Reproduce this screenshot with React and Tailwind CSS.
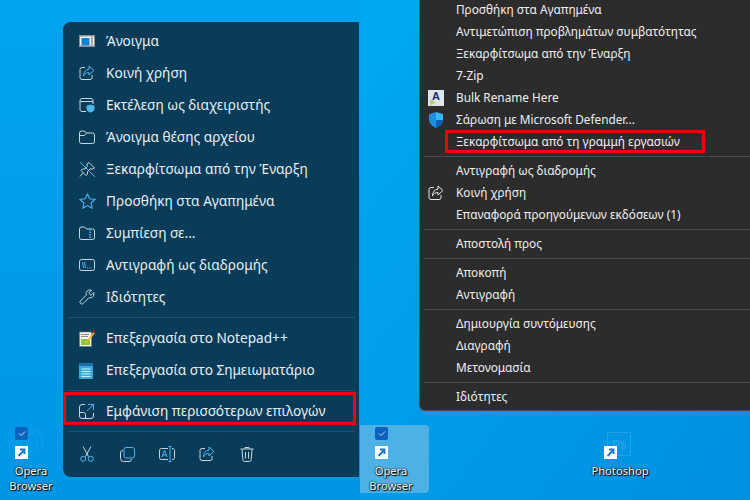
import React from 'react';

const line = '#c9d6dd';
const blue = '#4fb3ea';

const WindowIcon = () => (
  <svg width="16" height="12" viewBox="0 0 16 12">
    <rect width="16" height="12" fill="#8d8f91" />
    <rect x="1" y="1.5" width="14" height="9" fill="#f4f6f8" />
    <rect x="2.500" y="3" width="8" height="7.500" fill="#0f7fd8" />
    <path d="M12 3h2M12 5h2M12 7h2M12 9h2" stroke="#555" strokeWidth="1" />
  </svg>
);

const ShareIcon = ({ c1 = line, c2 = blue }) => (
  <svg width="16" height="16" viewBox="0 0 16 16" fill="none">
    <path d="M6 2.500H3a2 2 0 0 0-2 2v8a2 2 0 0 0 2 2h8a2 2 0 0 0 2-2v-2.500" stroke={c1} />
    <path d="M10 1l5 4.500-5 4.500V7.500C7.500 7.500 5.500 8.500 4.500 11c0-4 2-6.500 5.500-6.800z" stroke={c2} />
  </svg>
);

const AdminIcon = () => (
  <svg width="16" height="16" viewBox="0 0 16 16" fill="none">
    <path d="M7 14.500H3a2 2 0 0 1-2-2v-9a2 2 0 0 1 2-2h9a2 2 0 0 1 2 2V7M1 4.500h13" stroke={line} />
    <path d="M11.500 7.500l4 1.200v3c0 2-1.800 3.200-4 3.800-2.200-.6-4-1.800-4-3.800v-3z" fill={blue} />
  </svg>
);

const FolderIcon = () => (
  <svg width="16" height="14" viewBox="0 0 16 14" fill="none">
    <path d="M.5 3a2 2 0 0 1 2-2h3l2 2h6a2 2 0 0 1 2 2v6.500a2 2 0 0 1-2 2h-11a2 2 0 0 1-2-2zM.5 5.500h5l2-2.500" stroke={line} />
  </svg>
);

const UnpinIcon = () => (
  <svg width="17" height="17" viewBox="0 0 17 17" fill="none">
    <path d="M1 1l15 15" stroke={blue} />
    <path d="M10 1.500l5.500 5.500-2 1-2.500 0-2.500 2.500 0 2.500-1.500 1.500-5-5 1.500-1.500 2.500 0L8 5.500 8 3zM4 11.500l-3 4" stroke={line} />
  </svg>
);

const StarIcon = () => (
  <svg width="17" height="16" viewBox="0 0 17 16" fill="none">
    <path d="M8.500 1l2.200 4.800 5.300.6-3.900 3.600 1 5.200-4.600-2.600-4.600 2.600 1-5.200L1 6.400l5.300-.6z" stroke={blue} strokeWidth="1.100" />
  </svg>
);

const ZipIcon = () => (
  <svg width="16" height="14" viewBox="0 0 16 14" fill="none">
    <path d="M.5 3a2 2 0 0 1 2-2h3l2 2h6a2 2 0 0 1 2 2v6.500a2 2 0 0 1-2 2h-11a2 2 0 0 1-2-2z" stroke={line} />
    <path d="M11 3v10.500" stroke={blue} strokeWidth="1.600" strokeDasharray="1.500 1" />
  </svg>
);

const PathIcon = () => (
  <svg width="16" height="12" viewBox="0 0 16 12" fill="none">
    <rect x=".5" y=".5" width="15" height="11" rx="2" stroke={line} />
    <path d="M3.500 3l1 6M5.500 3l1 6M8 9h.9M10 9h.9M12 9h.9" stroke={blue} />
  </svg>
);

const WrenchIcon = () => (
  <svg width="16" height="16" viewBox="0 0 16 16" fill="none">
    <path d="M14.800 3.500l-2.800 2.800-2.300-2.300L12.500 1.200C10.300.5 8 1.300 7.300 3.300c-.3 1-.2 1.900.1 2.700L1.500 11.900a1.800 1.800 0 0 0 2.600 2.600L10 8.600c2.500.9 5.600-1 4.800-5.100z" stroke={line} />
  </svg>
);

const NotepadPlusIcon = () => (
  <svg width="16" height="17" viewBox="0 0 16 17">
    <rect x="0.500" y="2" width="12" height="14.500" fill="#f6f6ee" stroke="#777" strokeWidth=".6" />
    <rect x="2" y="9" width="9" height="6" fill="#8cc63f" />
    <path d="M2 4.500h8M2 6.500h7" stroke="#888" />
    <path d="M14.500 2L7.500 11l-1 2.500 2.200-1.200L15.800 3.300z" fill="#f2b632" />
    <rect x="13.800" y="0" width="2.200" height="2.200" fill="#a3141d" />
  </svg>
);

const NotepadIcon = () => (
  <svg width="14" height="17" viewBox="0 0 14 17">
    <rect x="0" y="1" width="14" height="16" rx="1" fill="#3fa6dc" />
    <rect x="0" y="1" width="14" height="3" fill="#1a6fa8" />
    <path d="M2.500 7h9M2.500 9.500h9M2.500 12h9M2.500 14.500h9" stroke="#d6eefa" />
  </svg>
);

const ExpandIcon = () => (
  <svg width="15" height="15" viewBox="0 0 15 15" fill="none">
    <path d="M6 .5H3a2.500 2.500 0 0 0-2.500 2.500v9A2.500 2.500 0 0 0 3 14.500h9a2.500 2.500 0 0 0 2.500-2.500V9M.5 8.500h4a2 2 0 0 1 2 2v4" stroke={line} />
    <path d="M9 .5h5.500V6M14.500.5L8 7" stroke={blue} />
  </svg>
);

const CutIcon = () => (
  <svg width="14" height="16" viewBox="0 0 14 16" fill="none">
    <path d="M3 .5l5.500 10M11 .5L5.500 10.500" stroke={line} />
    <circle cx="3.200" cy="12.800" r="2.500" stroke={blue} />
    <circle cx="10.800" cy="12.800" r="2.500" stroke={blue} />
  </svg>
);

const CopyIcon = () => (
  <svg width="15" height="15" viewBox="0 0 15 15" fill="none">
    <path d="M3 3.500a2.500 2.500 0 0 0-2.500 2.500v5.500A3 3 0 0 0 3.500 14.500H9a2.500 2.500 0 0 0 2.500-2.500" stroke={line} />
    <rect x="4" y=".5" width="10.500" height="10.500" rx="2" stroke={blue} />
  </svg>
);

const RenameIcon = () => (
  <svg width="16" height="16" viewBox="0 0 16 16" fill="none">
    <path d="M9 2.500H2.500a2 2 0 0 0-2 2v7a2 2 0 0 0 2 2H9M13 2.500a2 2 0 0 1 2.500 2v7a2 2 0 0 1-2.500 2" stroke={line} />
    <path d="M11 .5v15M9.500.5h3M9.500 15.500h3M3 11l2.300-6.500h.4L8 11M3.800 9h3.400" stroke={blue} />
  </svg>
);

const TrashIcon = () => (
  <svg width="14" height="16" viewBox="0 0 14 16" fill="none">
    <path d="M.5 3h13M5 3V1.500h4V3M2 3l.8 10.500a2 2 0 0 0 2 2h4.400a2 2 0 0 0 2-2L12 3M5.500 6v6.500M8.500 6v6.500" stroke={line} />
  </svg>
);

const BulkRenameIcon = () => (
  <svg width="16" height="16" viewBox="0 0 16 16">
    <rect width="16" height="16" fill="#dfe6ea" />
    <text x="8" y="10" textAnchor="middle" fontSize="11" fontWeight="700" fontFamily="Liberation Sans" fill="#122a78">A</text>
    <path d="M2 9l6 3.500-6 3.500z" fill="#b4d56b" />
  </svg>
);

const DefenderIcon = () => (
  <svg width="14" height="16" viewBox="0 0 14 16">
    <path d="M7 0l7 2.200v5.300c0 4-3 6.700-7 8.500-4-1.800-7-4.500-7-8.500V2.200z" fill="#1b8fe0" />
    <path d="M7 0l7 2.200V8H7z" fill="#38b6f0" />
    <path d="M7 8h7c-.3 3.500-3.200 6.300-7 8z" fill="#0c5fb8" />
  </svg>
);

const ShortcutArrow = () => (
  <div className="flex h-[13px] w-[13px] items-center justify-center bg-white">
    <svg width="9" height="9" viewBox="0 0 9 9" fill="none">
      <path d="M1.500 8L7 2.500M3 1.500h4.500V6" stroke="#1778c9" strokeWidth="1.800" />
    </svg>
  </div>
);

const CheckBox = () => (
  <div className="flex h-[13px] w-[13px] items-center justify-center rounded-[2px] bg-[#0a62bd]">
    <svg width="8" height="7" viewBox="0 0 8 7" fill="none">
      <path d="M1 3.500l2 2 4-4" stroke="#bcd6ef" />
    </svg>
  </div>
);

const newMenu = [
  [<WindowIcon />, 'Άνοιγμα'],
  [<ShareIcon />, 'Κοινή χρήση'],
  [<AdminIcon />, 'Εκτέλεση ως διαχειριστής'],
  [<FolderIcon />, 'Άνοιγμα θέσης αρχείου'],
  [<UnpinIcon />, 'Ξεκαρφίτσωμα από την Έναρξη'],
  [<StarIcon />, 'Προσθήκη στα Αγαπημένα'],
  [<ZipIcon />, 'Συμπίεση σε...'],
  [<PathIcon />, 'Αντιγραφή ως διαδρομής'],
  [<WrenchIcon />, 'Ιδιότητες'],
];

const classicGroups = [
  [
    ['Προσθήκη στα Αγαπημένα'],
    ['Αντιμετώπιση προβλημάτων συμβατότητας'],
    ['Ξεκαρφίτσωμα από την Έναρξη'],
    ['7-Zip'],
    ['Bulk Rename Here', <BulkRenameIcon />],
    ['Σάρωση με Microsoft Defender...', <DefenderIcon />],
    ['Ξεκαρφίτσωμα από τη γραμμή εργασιών'],
  ],
  [
    ['Αντιγραφή ως διαδρομής'],
    ['Κοινή χρήση', <ShareIcon c1="#e8e8e8" c2="#e8e8e8" />],
    ['Επαναφορά προηγούμενων εκδόσεων (1)'],
  ],
  [['Αποστολή προς']],
  [['Αποκοπή'], ['Αντιγραφή']],
  [['Δημιουργία συντόμευσης'], ['Διαγραφή'], ['Μετονομασία']],
  [['Ιδιότητες']],
];

const NewRow = ({ icon, label }) => (
  <div className="flex h-8 items-center">
    <div className="flex w-[43px] shrink-0 items-center pl-4">{icon}</div>
    <span>{label}</span>
  </div>
);

const DesktopLabel = ({ children }) => (
  <span className="text-center text-[11.2px] leading-[15px] text-white [text-shadow:1px_1px_1px_#000,0_0_2px_#000,0_0_1px_#000]">
    {children}
  </span>
);

const DesktopIcon = ({ labels, check, ghost }) => (
  <div className="relative flex w-[62px] flex-col items-center">
    {ghost}
    <div className="-ml-[19px] flex flex-col gap-[6px]">
      <div className={check ? '' : 'invisible'}>
        <CheckBox />
      </div>
      <ShortcutArrow />
    </div>
    <div className="mt-1 flex flex-col items-center">
      {labels.map((l) => (
        <DesktopLabel key={l}>{l}</DesktopLabel>
      ))}
    </div>
  </div>
);

const OperaGhost = () => (
  <svg className="absolute left-[20px] top-[2px]" width="24" height="27" viewBox="0 0 24 27" fill="none">
    <ellipse cx="12" cy="13.500" rx="11" ry="12.500" stroke="#ffffff" strokeOpacity=".08" />
    <ellipse cx="12" cy="13.500" rx="5" ry="10" stroke="#ffffff" strokeOpacity=".08" />
  </svg>
);

const PsGhost = () => (
  <svg className="absolute left-[18px] top-[5px]" width="24" height="24" viewBox="0 0 24 24" fill="none">
    <rect x=".5" y=".5" width="23" height="23" stroke="#ffffff" strokeOpacity=".12" />
    <text x="5" y="17" fontSize="12" fontWeight="700" fontFamily="Liberation Sans" fill="#ffffff" fillOpacity=".14">Ps</text>
  </svg>
);

const App = () => {
  return (
    <div className="flex h-[500px] w-[750px] overflow-hidden font-['Noto_Sans',sans-serif]">
      {/* Windows 11 menu */}
      <div className="flex h-full w-[360px] bg-gradient-to-b from-[#00a4ee] to-[#0096e6] pr-px">
        <div className="w-[63px] pt-[427px]">
          <DesktopIcon labels={['Opera', 'Browser']} check ghost={<OperaGhost />} />
        </div>
        <div className="relative mt-[22px] h-[455px] w-[296px] rounded-l-lg bg-[#083c58] pt-[3px] text-[13.65px] text-[#e9eff2]">
          {newMenu.map(([icon, label]) => (
            <NewRow key={label} icon={icon} label={label} />
          ))}
          <div className="mx-[4px] my-[4px] h-px bg-[#1f5069]" />
          <NewRow icon={<NotepadPlusIcon />} label="Επεξεργασία στο Notepad++" />
          <NewRow icon={<NotepadIcon />} label="Επεξεργασία στο Σημειωματάριο" />
          <div className="mx-[4px] my-[4px] h-px bg-[#1f5069]" />
          <NewRow icon={<ExpandIcon />} label="Εμφάνιση περισσότερων επιλογών" />
          <div className="mx-[4px] my-[4px] h-px bg-[#1f5069]" />
          <div className="flex h-9 items-center pl-[4px]">
            {[<CutIcon />, <CopyIcon />, <RenameIcon />, <ShareIcon />, <TrashIcon />].map((icon, i) => (
              <div key={i} className="flex w-10 justify-center">{icon}</div>
            ))}
          </div>
          <div className="absolute left-0 top-[370px] h-[33px] w-[293px] border-[3px] border-[#f00000]" />
        </div>
      </div>

      {/* classic menu */}
      <div className="flex h-full w-[390px] flex-col bg-gradient-to-br from-[#00a8f2] to-[#0090e0]">
        <div className="relative ml-[59px] h-[411px] rounded-bl-md border-b border-l border-[#4a4a4a] bg-[#2c2c2c] text-[11.8px] text-[#f0f0f0]">
          {classicGroups.map((group, i) => (
            <div key={i} className={i === 0 ? '-mt-px' : ''}>
              {i > 0 && <div className="ml-1 my-[3px] h-px bg-[#494949]" />}
              {group.map(([label, icon]) => (
                <div key={label} className="flex h-[22px] items-center">
                  <div className="flex w-[36px] shrink-0 justify-center pl-[1px] pr-[6px]">{icon}</div>
                  <span>{label}</span>
                </div>
              ))}
            </div>
          ))}
          <div className="absolute left-[25px] top-[130px] h-[23px] w-[260px] border-[3px] border-[#f00000]" />
        </div>
        <div className="mt-[14px] flex">
          <div className="h-[68px] w-[69px] rounded-r-sm bg-[#4db1e6] pt-[2px]">
            <DesktopIcon labels={['Opera', 'Browser']} check />
          </div>
          <div className="ml-[160px] pt-[2px]">
            <DesktopIcon labels={['Photoshop']} ghost={<PsGhost />} />
          </div>
        </div>
      </div>
    </div>
  );
};

export default App;
